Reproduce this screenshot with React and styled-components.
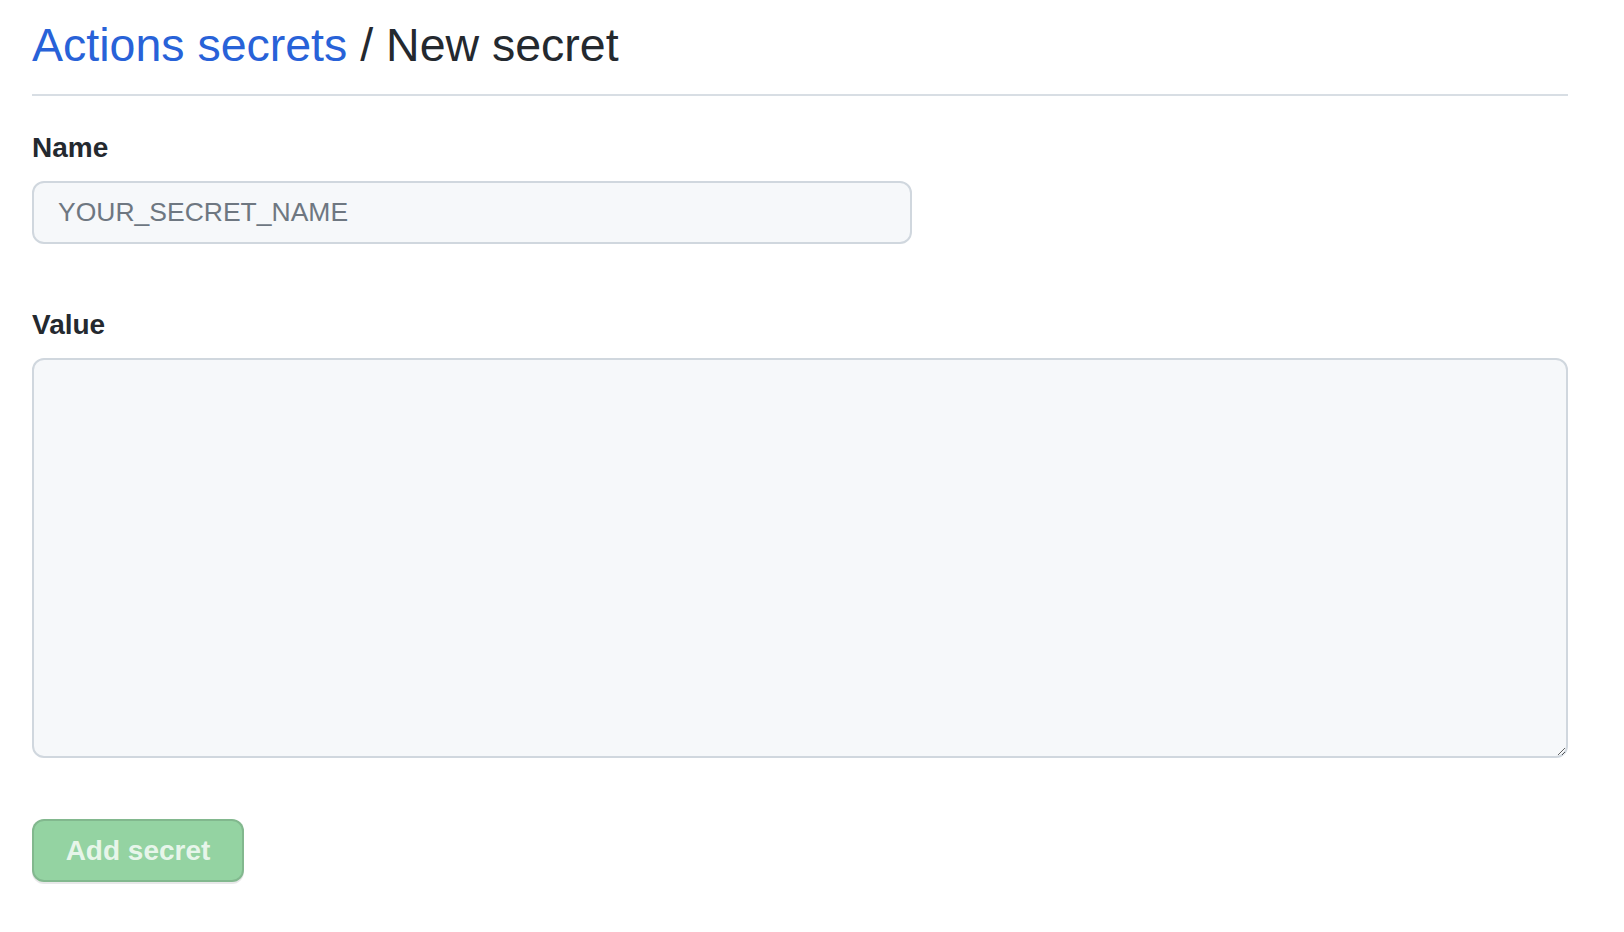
import React from 'react';
import styled, { createGlobalStyle } from 'styled-components';

const GlobalStyle = createGlobalStyle`
    html, body {
        margin: 0;
        padding: 0;
        background: #ffffff;
        font-family: 'Liberation Sans', Arial, sans-serif;
        color: #24292f;
    }
    * {
        box-sizing: border-box;
    }
`;

const Page = styled.div`
    padding: 15px 56px 40px 32px;
`;

const Subhead = styled.div`
    padding-bottom: 19px;
    border-bottom: 2px solid #d8dee4;
    margin-bottom: 32px;
`;

const Heading = styled.h2`
    margin: 0;
    font-size: 46.5px;
    line-height: 60px;
    font-weight: 400;
    color: #24292f;
`;

const Crumb = styled.a`
    color: #2862d8;
    text-decoration: none;
`;

const Form = styled.form`
    display: flex;
    flex-direction: column;
    align-items: flex-start;
`;

const Field = styled.div`
    display: flex;
    flex-direction: column;
    width: 100%;
    margin-bottom: ${(p) => p.$gap}px;
`;

const Label = styled.label`
    font-size: 28px;
    line-height: 40px;
    font-weight: 700;
    margin-bottom: 13px;
    color: #24292f;
`;

const baseControl = `
    font-family: 'Liberation Sans', Arial, sans-serif;
    font-size: 26.5px;
    color: #24292f;
    background: #f6f8fa;
    border: 2px solid #d0d7de;
    border-radius: 12px;
    outline: none;
    &::placeholder {
        color: #6e7781;
    }
`;

const Input = styled.input`
    ${baseControl}
    width: ${(p) => p.$width}px;
    height: 63px;
    padding: 0 24px;
`;

const TextArea = styled.textarea`
    ${baseControl}
    width: 100%;
    height: 400px;
    padding: 16px 24px;
    resize: vertical;
    display: block;
`;

const Button = styled.button`
    height: 63px;
    width: 212px;
    font-family: 'Liberation Sans', Arial, sans-serif;
    font-size: 28px;
    font-weight: 700;
    color: rgba(255, 255, 255, 0.8);
    background: #94d3a2;
    border: 2px solid rgba(27, 31, 36, 0.15);
    border-radius: 12px;
    box-shadow: 0 2px 0 rgba(27, 31, 36, 0.1);
    cursor: not-allowed;
`;

const App = () => {
    return (
        <>
            <GlobalStyle />
            <Page>
                <Subhead>
                    <Heading>
                        <Crumb href="#">Actions secrets</Crumb> / New secret
                    </Heading>
                </Subhead>
                <Form onSubmit={(e) => e.preventDefault()}>
                    <Field $gap={61}>
                        <Label htmlFor="secret_name">Name</Label>
                        <Input id="secret_name" $width={880} placeholder="YOUR_SECRET_NAME" />
                    </Field>
                    <Field $gap={61}>
                        <Label htmlFor="secret_value">Value</Label>
                        <TextArea id="secret_value" />
                    </Field>
                    <Button type="submit" disabled>
                        Add secret
                    </Button>
                </Form>
            </Page>
        </>
    );
};

export default App;
